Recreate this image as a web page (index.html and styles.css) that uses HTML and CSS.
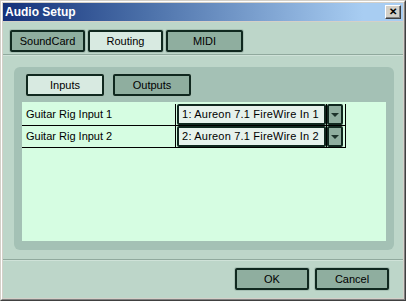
FILE: index.html
```html
<!DOCTYPE html>
<html>
<head>
<meta charset="utf-8">
<title>Audio Setup</title>
<link rel="stylesheet" href="styles.css">
</head>
<body>
<div class="window">
  <div class="frame">
    <div class="titlebar">
      <span class="title">Audio Setup</span>
      <span class="close">&#x2715;</span>
    </div>
    <div class="content">
      <div class="tabs">
        <div class="btn tab">SoundCard</div>
        <div class="btn tab active">Routing</div>
        <div class="btn tab">MIDI</div>
      </div>
      <div class="sep"></div>
      <div class="panel">
        <div class="subtabs">
          <div class="btn subtab active">Inputs</div>
          <div class="btn subtab">Outputs</div>
        </div>
        <div class="list">
          <div class="row">
            <div class="label">Guitar Rig Input 1</div>
            <div class="cell"><div class="select">1: Aureon 7.1 FireWire In 1</div></div>
            <div class="drop"><div class="arrow"></div></div>
          </div>
          <div class="row">
            <div class="label">Guitar Rig Input 2</div>
            <div class="cell"><div class="select">2: Aureon 7.1 FireWire In 2</div></div>
            <div class="drop"><div class="arrow"></div></div>
          </div>
        </div>
      </div>
      <div class="sep bottom"></div>
      <div class="footer">
        <div class="btn action">OK</div>
        <div class="btn action">Cancel</div>
      </div>
    </div>
  </div>
</div>
</body>
</html>
```
FILE: styles.css
```css
body
{
margin: 0;
font-family: "Liberation Sans", Arial, sans-serif;
font-size: 11px;
color: #000;
}

.window
{
box-sizing: border-box;
width: 406px;
height: 301px;
border: 1px solid;
border-color: #d4d0c8 #404040 #404040 #d4d0c8;
}

.frame
{
box-sizing: border-box;
height: 100%;
border: 1px solid;
border-color: #fff #808080 #808080 #fff;
padding: 1px;
background: #d4d0c8;
display: flex;
flex-direction: column;
}

.titlebar
{
height: 18px;
margin-bottom: 1px;
background: linear-gradient(to right, #14317a, #4a6fa8 35%, #a8cdf2 90%);
display: flex;
align-items: center;
justify-content: space-between;
padding: 0 2px 0 2px;
}

.title
{
color: #fff;
font-weight: bold;
font-size: 12px;
}

.close
{
box-sizing: border-box;
width: 16px;
height: 14px;
background: #d4d0c8;
border: 1px solid;
border-color: #fff #404040 #404040 #fff;
box-shadow: inset -1px -1px 0 #808080;
font-size: 10px;
font-weight: bold;
line-height: 12px;
text-align: center;
}

.content
{
flex: 1;
background: #bdd6c9;
display: flex;
flex-direction: column;
}

.btn
{
box-sizing: border-box;
height: 22px;
border: 2px solid #10281f;
border-radius: 2px;
box-shadow: 0 0 0 1px #a6bfb3;
background: #8fae9f;
text-align: center;
line-height: 18px;
}

.btn.active
{
background: #d8eae1;
}

.tabs
{
display: flex;
gap: 3px;
margin: 8px 0 0 7px;
}

.tab
{
width: 75px;
}

.tab:last-child
{
width: 77px;
}

.sep
{
height: 0;
margin-top: 2px;
border-top: 1px solid #90a99d;
border-bottom: 1px solid #cfe2d8;
}

.panel
{
box-sizing: border-box;
margin: 11px 9px 0 11px;
height: 183px;
border-radius: 6px;
background: #a4c1b5;
padding: 7px 8px 9px 8px;
display: flex;
flex-direction: column;
}

.subtabs
{
display: flex;
gap: 9px;
margin-left: 4px;
}

.subtab
{
width: 78px;
}

.list
{
box-sizing: border-box;
margin-top: 6px;
height: 140px;
background: #d6fde2;
padding-top: 2px;
}

.row
{
display: flex;
width: 324px;
height: 21px;
border-bottom: 1px solid #000;
}

.label
{
width: 150px;
padding-left: 4px;
border-right: 1px solid #000;
line-height: 21px;
}

.cell
{
width: 150px;
border-right: 1px solid #000;
padding: 0 0 0 1px;
}

.select
{
box-sizing: border-box;
height: 21px;
border: 2px solid #10281f;
border-radius: 2px;
background: #e6f2ec;
padding-left: 3px;
line-height: 17px;
letter-spacing: 0.2px;
white-space: nowrap;
overflow: hidden;
}

.drop
{
width: 18px;
border-right: 1px solid #000;
}

.arrow
{
box-sizing: border-box;
width: 16px;
height: 21px;
border: 2px solid #10281f;
border-radius: 2px;
background: #8fae9f;
display: flex;
align-items: center;
justify-content: center;
}

.arrow::after
{
content: "";
border-left: 4px solid transparent;
border-right: 4px solid transparent;
border-top: 4px solid #1d332b;
}

.sep.bottom
{
margin-top: 9px;
}

.footer
{
display: flex;
justify-content: flex-end;
gap: 6px;
margin: 7px 14px 0 0;
}

.action
{
width: 74px;
}
```
